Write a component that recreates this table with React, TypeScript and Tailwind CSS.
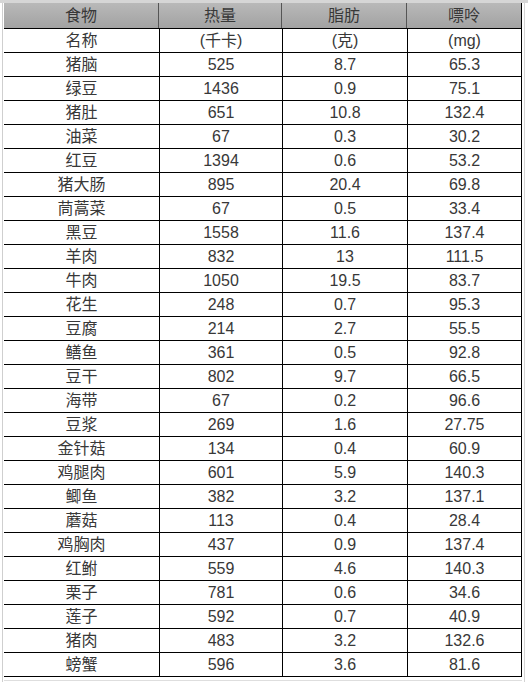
const rows: [string, string, string, string][] = [
  ['名称', '(千卡)', '(克)', '(mg)'],
  ['猪脑', '525', '8.7', '65.3'],
  ['绿豆', '1436', '0.9', '75.1'],
  ['猪肚', '651', '10.8', '132.4'],
  ['油菜', '67', '0.3', '30.2'],
  ['红豆', '1394', '0.6', '53.2'],
  ['猪大肠', '895', '20.4', '69.8'],
  ['茼蒿菜', '67', '0.5', '33.4'],
  ['黑豆', '1558', '11.6', '137.4'],
  ['羊肉', '832', '13', '111.5'],
  ['牛肉', '1050', '19.5', '83.7'],
  ['花生', '248', '0.7', '95.3'],
  ['豆腐', '214', '2.7', '55.5'],
  ['鳝鱼', '361', '0.5', '92.8'],
  ['豆干', '802', '9.7', '66.5'],
  ['海带', '67', '0.2', '96.6'],
  ['豆浆', '269', '1.6', '27.75'],
  ['金针菇', '134', '0.4', '60.9'],
  ['鸡腿肉', '601', '5.9', '140.3'],
  ['鲫鱼', '382', '3.2', '137.1'],
  ['蘑菇', '113', '0.4', '28.4'],
  ['鸡胸肉', '437', '0.9', '137.4'],
  ['红鲋', '559', '4.6', '140.3'],
  ['栗子', '781', '0.6', '34.6'],
  ['莲子', '592', '0.7', '40.9'],
  ['猪肉', '483', '3.2', '132.6'],
  ['螃蟹', '596', '3.6', '81.6'],
];

const cols = 'grid grid-cols-[155px_123px_125px_115px]';

export default function App() {
  return (
    <div
      className="w-[528px] h-[682px] bg-white overflow-hidden text-[16px] text-[#383838]"
      style={{ fontFamily: '"Liberation Sans", "Noto Sans CJK SC", sans-serif' }}
    >
      {/* light strip above the sheet */}
      <div className="h-[3px] bg-[#d6d6d6]" />
      <div className="flex">
        <div className="w-[2px]" />
        <div className="w-[1px] bg-[#cfcfcf] h-[679px]" />
        <div className="w-[1px]" />
        <div className="flex flex-col">
          {/* header */}
          <div className={`${cols} h-[26px] bg-gradient-to-b from-[#b9b9b9] to-[#a2a2a2] border-b border-black`}>
            {['食物', '热量', '脂肪', '嘌呤'].map((h, i) => (
              <div
                key={h}
                className={`flex items-center justify-center leading-none ${i < 3 ? 'border-r border-[#555]' : 'border-r border-black'}`}
              >
                {h}
              </div>
            ))}
          </div>
          {rows.map((r) => (
            <div key={r[0]} className={`${cols} h-[24px] border-b border-black`}>
              {r.map((c, i) => (
                <div key={i} className={`flex items-center justify-center leading-none pt-[1px] ${i > 0 ? 'border-l border-black' : ''} ${i === 3 ? 'border-r border-black' : ''}`}>
                  {c}
                </div>
              ))}
            </div>
          ))}
          <div className="h-[3px]" />
          <div className="h-[1px] bg-[#dedede]" />
        </div>
        <div className="w-[2px]" />
        <div className="w-[1px] bg-[#d4d4d4] h-[679px]" />
      </div>
    </div>
  );
}
